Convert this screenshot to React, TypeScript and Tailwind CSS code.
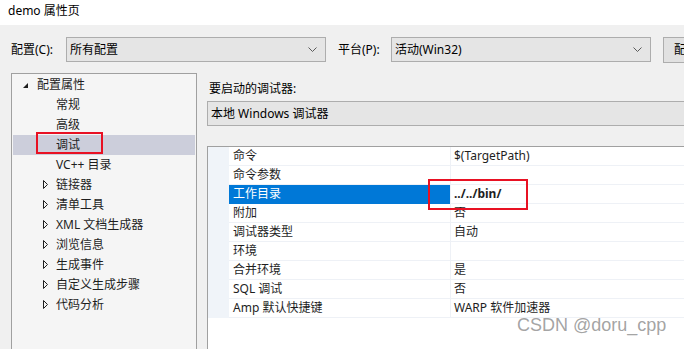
import React from 'react';

const FONT = "'Noto Sans', 'Noto Sans CJK SC', sans-serif";

type TreeItem = { label: string; level: 0 | 1; arrow?: 'open' | 'closed'; selected?: boolean };

const treeItems: TreeItem[] = [
  { label: '配置属性', level: 0, arrow: 'open' },
  { label: '常规', level: 1 },
  { label: '高级', level: 1 },
  { label: '调试', level: 1, selected: true },
  { label: 'VC++ 目录', level: 1 },
  { label: '链接器', level: 1, arrow: 'closed' },
  { label: '清单工具', level: 1, arrow: 'closed' },
  { label: 'XML 文档生成器', level: 1, arrow: 'closed' },
  { label: '浏览信息', level: 1, arrow: 'closed' },
  { label: '生成事件', level: 1, arrow: 'closed' },
  { label: '自定义生成步骤', level: 1, arrow: 'closed' },
  { label: '代码分析', level: 1, arrow: 'closed' },
];

const props: { name: string; value: string; selected?: boolean }[] = [
  { name: '命令', value: '$(TargetPath)' },
  { name: '命令参数', value: '' },
  { name: '工作目录', value: '../../bin/', selected: true },
  { name: '附加', value: '否' },
  { name: '调试器类型', value: '自动' },
  { name: '环境', value: '' },
  { name: '合并环境', value: '是' },
  { name: 'SQL 调试', value: '否' },
  { name: 'Amp 默认快捷键', value: 'WARP 软件加速器' },
];

const Chevron = () => (
  <svg width="9" height="5" viewBox="0 0 9 5" className="shrink-0">
    <polyline points="0.5,0.5 4.5,4.5 8.5,0.5" fill="none" stroke="#5a5a5a" strokeWidth="1" />
  </svg>
);

const Combo = ({ text }: { text: string }) => (
  <div className="w-[260px] h-[25px] shrink-0 flex items-center justify-between bg-[#e5e5e5] border border-[#adadad] pl-[3px] pr-[8px]">
    <span className="text-[12px] text-black leading-none">{text}</span>
    <Chevron />
  </div>
);

const TreeRow = ({ item }: { item: TreeItem }) => (
  <div className={`relative h-[20px] flex items-center ${item.selected ? 'bg-[#cccedb]' : ''}`}>
    {item.arrow === 'open' && (
      <svg width="6" height="6" viewBox="0 0 6 6" className="absolute left-[10px] top-[8px]">
        <polygon points="5,0 5,5 0,5" fill="#1e1e1e" />
      </svg>
    )}
    {item.arrow === 'closed' && (
      <svg width="6" height="10" viewBox="0 0 6 10" className="absolute left-[30px] top-[5px]">
        <polygon points="0.5,0.5 4.5,4.5 0.5,8.5" fill="none" stroke="#1e1e1e" strokeWidth="1" />
      </svg>
    )}
    <span className={`text-[12px] text-[#1e1e1e] leading-none ${item.level === 0 ? 'pl-[24px]' : 'pl-[43px]'}`}>
      {item.label}
    </span>
  </div>
);

export default function App() {
  return (
    <div className="relative w-[684px] h-[349px] overflow-hidden bg-[#f0f0f0]" style={{ fontFamily: FONT }}>
      {/* title bar */}
      <div className="h-[25px] bg-white flex items-center pl-[8px] pb-[3px]">
        <span className="text-[12px] text-black leading-none">demo 属性页</span>
      </div>

      {/* configuration row */}
      <div className="flex items-center pt-[12px] pl-[11px] h-[37px]">
        <span className="w-[55px] shrink-0 text-[12px] text-black leading-none">配置(C):</span>
        <Combo text="所有配置" />
        <span className="ml-[12px] w-[53px] shrink-0 text-[12px] text-black leading-none">平台(P):</span>
        <Combo text="活动(Win32)" />
        <div className="ml-[12px] w-[120px] h-[26px] bg-[#e1e1e1] border border-[#adadad] flex items-center pl-[10px] shrink-0">
          <span className="text-[12px] text-black leading-none whitespace-nowrap">配置管理器(O)...</span>
        </div>
      </div>

      {/* main area */}
      <div className="flex pl-[11px] pt-[11px]">
        <div className="w-[186px] h-[300px] shrink-0 bg-[#f5f5f5] border border-[#a0a0a0] px-[1px] pt-[1px]">
          {treeItems.map((it) => (
            <TreeRow key={it.label} item={it} />
          ))}
        </div>

        <div className="ml-[10px] w-[500px] shrink-0 flex flex-col">
          <div className="h-[28px] flex items-center pl-[2px] pt-[4px]">
            <span className="text-[12px] text-black leading-none">要启动的调试器:</span>
          </div>
          <div className="w-[500px] h-[25px] bg-[#e5e5e5] border border-[#adadad] flex items-center pl-[3px]">
            <span className="text-[12px] text-black leading-none">本地 Windows 调试器</span>
          </div>

          <div className="mt-[20px] w-[500px] h-[220px] bg-white border border-[#a0a0a0] flex flex-col">
            {props.map((p) => (
              <div key={p.name} className="flex h-[19px] shrink-0">
                <div className="w-[21px] bg-[#f0f4f9]" />
                <div
                  className={`w-[221px] flex items-center pl-[4px] border-b ${
                    p.selected ? 'bg-[#0078d7] text-white border-[#0078d7]' : 'text-[#1e1e1e] border-[#eef1f6]'
                  }`}
                >
                  <span className="text-[12px] leading-none">{p.name}</span>
                </div>
                <div className="w-[1px] bg-[#eef1f6]" />
                <div className="flex-1 flex items-center pl-[3px] border-b border-[#eef1f6]">
                  <span className={`text-[12px] leading-none text-[#1e1e1e] ${p.selected ? 'font-bold' : ''}`}>
                    {p.value}
                  </span>
                </div>
              </div>
            ))}
          </div>
        </div>
      </div>

      {/* red annotation boxes */}
      <div className="absolute left-[36px] top-[132px] w-[67px] h-[22px] border-2 border-[#e81123]" />
      <div className="absolute left-[428px] top-[179px] w-[100px] h-[31px] border-2 border-[#e81123]" />

      {/* watermark */}
      <div
        className="absolute left-[517px] top-[316px] text-[18px] leading-none text-[#8c8c8c]/80"
        style={{ fontFamily: "'Liberation Sans', sans-serif" }}
      >
        CSDN @doru_cpp
      </div>
    </div>
  );
}
